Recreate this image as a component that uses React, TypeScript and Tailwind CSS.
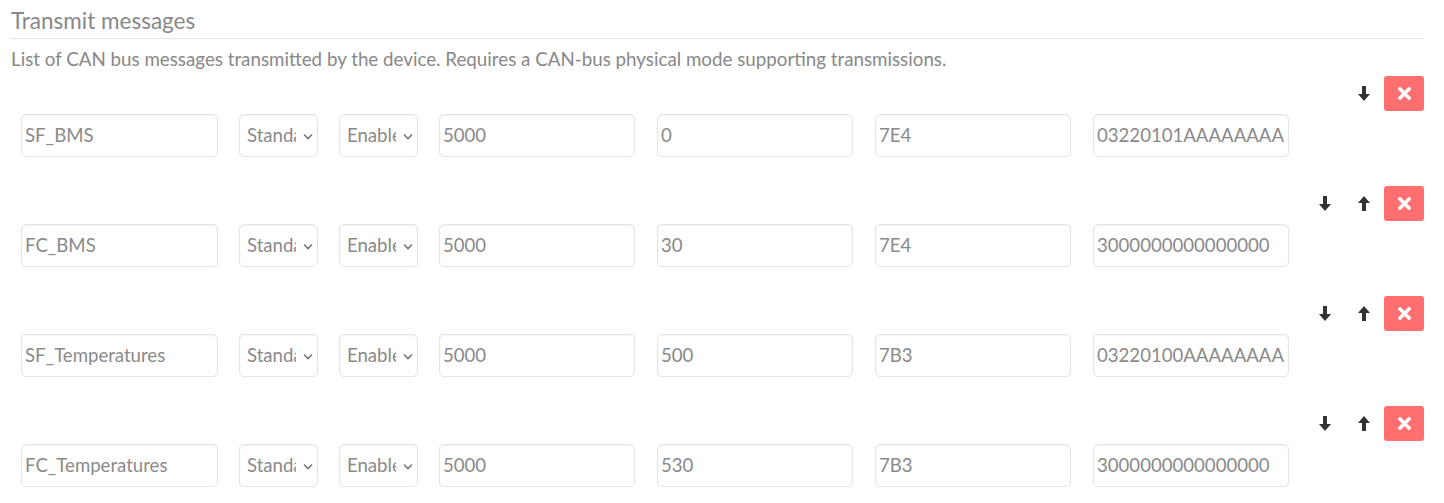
// one transmitted CAN message
type TxMessage = {
  name: string;
  frame: string;
  state: string;
  period: string;
  offset: string;
  id: string;
  data: string;
};

const messages: TxMessage[] = [
  { name: "SF_BMS", frame: "Standard", state: "Enabled", period: "5000", offset: "0", id: "7E4", data: "03220101AAAAAAAA" },
  { name: "FC_BMS", frame: "Standard", state: "Enabled", period: "5000", offset: "30", id: "7E4", data: "3000000000000000" },
  { name: "SF_Temperatures", frame: "Standard", state: "Enabled", period: "5000", offset: "500", id: "7B3", data: "03220100AAAAAAAA" },
  { name: "FC_Temperatures", frame: "Standard", state: "Enabled", period: "5000", offset: "530", id: "7B3", data: "3000000000000000" },
];

const field =
  "shrink-0 h-[43px] rounded-[5px] border border-[#e4e4e4] bg-white shadow-[inset_0_1px_2px_rgba(0,0,0,0.05)] text-[18.6px] text-[#8a8a8a] flex items-center overflow-hidden";

function ArrowDown() {
  return (
    <svg width="12" height="15" viewBox="0 0 12 15" className="text-[#333]">
      <path d="M4 0h4v8h4l-6 7-6-7h4z" fill="currentColor" />
    </svg>
  );
}

function ArrowUp() {
  return (
    <svg width="12" height="15" viewBox="0 0 12 15" className="text-[#333]">
      <path d="M4 15h4V7h4L6 0 0 7h4z" fill="currentColor" />
    </svg>
  );
}

function Cross() {
  return (
    <svg width="13" height="13" viewBox="0 0 13 13">
      <path d="M2 2l9 9M11 2l-9 9" stroke="white" strokeWidth="3.6" strokeLinecap="square" />
    </svg>
  );
}

function Select({ value }: { value: string }) {
  return (
    <div className={`${field} w-[79px] pl-[7px] gap-[7px]`}>
      <span className="w-[49px] shrink-0 overflow-hidden whitespace-nowrap">{value}</span>
      <svg width="10" height="7" viewBox="0 0 10 7" className="shrink-0 mt-[1px]">
        <path d="M1 1.5l4 4 4-4" fill="none" stroke="#777" strokeWidth="1.6" />
      </svg>
    </div>
  );
}

function TextField({ value, wide }: { value: string; wide: string }) {
  return <div className={`${field} ${wide} pl-[3px] whitespace-nowrap`}>{value}</div>;
}

export default function App() {
  return (
    <div
      className="w-[1444px] h-[503px] bg-white overflow-hidden pl-[10px] pr-[20px]"
      style={{ fontFamily: "Lato, 'Open Sans', sans-serif" }}
    >
      <h2 className="pt-[7px] pl-[1px] text-[22.5px] leading-[28px] text-[#888] border-b border-[#e5e5e5] pb-[3px]">
        Transmit messages
      </h2>
      <p className="pt-[9px] pl-[1px] text-[18.75px] leading-[22px] text-[#888] whitespace-nowrap">
        List of CAN bus messages transmitted by the device. Requires a CAN-bus physical mode supporting transmissions.
      </p>

      <div className="flex flex-col gap-[29px] pt-[6px]">
        {messages.map((m, i) => (
          <div key={m.name} className="flex flex-col gap-[3px]">
            <div className="flex justify-end h-[35px]">
              <button className="w-[39px] h-[35px] flex items-center justify-center">
                <ArrowDown />
              </button>
              {i > 0 && (
                <button className="w-[39px] h-[35px] flex items-center justify-center">
                  <ArrowUp />
                </button>
              )}
              <button className="ml-[1px] w-[40px] h-[35px] rounded-[3px] bg-[#ff6f6f] flex items-center justify-center">
                <Cross />
              </button>
            </div>
            <div className="flex items-center pl-[11px]">
              <TextField value={m.name} wide="w-[197px]" />
              <div className="w-[21px] shrink-0" />
              <Select value={m.frame} />
              <div className="w-[21px] shrink-0" />
              <Select value={m.state} />
              <div className="w-[21px] shrink-0" />
              <div className="flex gap-[22px]">
                <TextField value={m.period} wide="w-[196px]" />
                <TextField value={m.offset} wide="w-[196px]" />
                <TextField value={m.id} wide="w-[196px]" />
                <TextField value={m.data} wide="w-[196px]" />
              </div>
            </div>
          </div>
        ))}
      </div>
    </div>
  );
}
